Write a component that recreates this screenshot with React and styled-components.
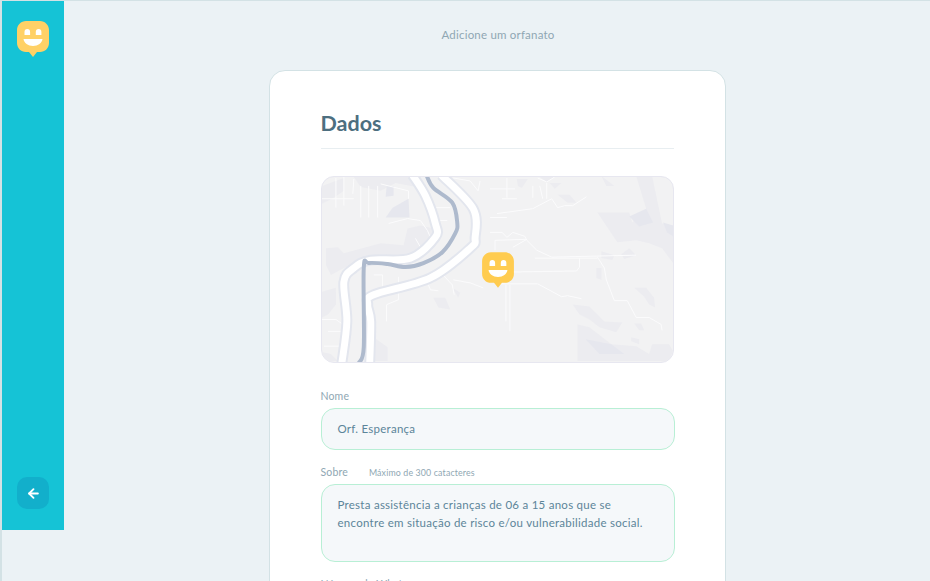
import React from 'react';
import styled, { createGlobalStyle } from 'styled-components';
import { ArrowLeft } from 'lucide-react';

const GlobalStyle = createGlobalStyle`
  html, body {
    margin: 0;
    height: 100%;
    overflow: hidden;
    background: #ebf2f5;
  }
  * {
    box-sizing: border-box;
  }
`;

const Page = styled.div`
  display: flex;
  height: 581px;
  overflow: hidden;
  background: #ebf2f5;
  border-top: 1px solid #d3e2e5;
  border-left: 2px solid #d3e2e5;
  font-family: 'Lato', 'Open Sans', sans-serif;
`;

const Sidebar = styled.aside`
  flex: 0 0 62px;
  height: 529px;
  padding: 20px 15px 21px;
  display: flex;
  flex-direction: column;
  justify-content: space-between;
  background: #15c3d6;
`;

const BackButton = styled.button`
  width: 32px;
  height: 32px;
  padding: 0;
  border: 0;
  border-radius: 10px;
  display: flex;
  align-items: center;
  justify-content: center;
  color: #fff;
  background: #12afcb;
`;

const Main = styled.main`
  flex: 1;
  min-width: 0;
  display: flex;
  flex-direction: column;
  align-items: center;
`;

const PageTitle = styled.p`
  flex-shrink: 0;
  margin: 0;
  padding: 27px 0 0 2px;
  height: 69px;
  font-size: 11.5px;
  line-height: 14px;
  letter-spacing: 0.2px;
  color: #8fa7b3;
`;

const Card = styled.section`
  width: 457px;
  flex-shrink: 0;
  padding: 38px 51px 40px;
  background: #fff;
  border: 1px solid #d3e2e5;
  border-radius: 16px;
`;

const Heading = styled.h2`
  margin: 0 0 27px;
  padding-bottom: 11px;
  font-size: 21.5px;
  line-height: 28px;
  font-weight: 700;
  color: #4d6f80;
  border-bottom: 1px solid #e8eef1;
`;

const MapFrame = styled.div`
  height: 187px;
  margin-bottom: 27px;
  overflow: hidden;
  border: 1px solid #e7e7f0;
  border-radius: 13px;
  background: #f2f2f3;

  svg {
    display: block;
    width: 100%;
    height: 100%;
  }
`;

const Field = styled.div`
  margin-bottom: 16px;
`;

const LabelRow = styled.label`
  display: flex;
  align-items: baseline;
  gap: 21px;
  margin-bottom: 5px;
  font-size: 10.5px;
  line-height: 13px;
  letter-spacing: 0.15px;
  color: #8fa7b3;
`;

const Hint = styled.span`
  font-size: 8.8px;
`;

const InputBox = styled.div`
  height: ${(p) => p.$height}px;
  margin-right: -1px;
  padding: ${(p) => p.$top}px 16px 0;
  font-size: 11.5px;
  line-height: 18px;
  letter-spacing: 0.26px;
  color: #5c8599;
  background: #f5f8fa;
  border: 1px solid #b8efd5;
  border-radius: 14px;
`;

// page coordinates, the svg viewBox starts at the map's corner
const PATCHES = [
  'M321 185 L343 177 V190 L333 197 L321 203 Z',
  'M325 248 L337 247 L343 253 L380 243 L403 245 L407 228 L420 225 L433 228 L423 255 L410 258 L360 262 L343 268 L330 275 L325 265 Z',
  'M321 292 L335 288 V305 L327 315 L321 318 Z',
  'M321 353 L330 355 L337 362 H321 Z',
  'M373 338 L387 348 V362 H373 Z',
  'M353 176 H412 L416 186 L395 182 L380 190 L360 186 Z',
  'M433 298 H445 L450 310 L438 308 Z',
  'M452 288 L460 293 L458 298 Z',
  'M517 178 H528 L522 187 L518 185 Z',
  'M540 176 H555 L547 181 Z',
  'M550 182 H562 L555 188 Z',
  'M558 194 H570 L577 202 L568 202 Z',
  'M602 175 L615 185 H607 Z',
  'M598 212 H630 L633 222 L647 208 L637 175 H653 L663 223 L674 225 V263 L663 248 L650 243 L637 240 L618 242 Z',
  'M602 251 L615 255 L613 260 L602 258 Z',
  'M622 254 L630 248 L637 255 L625 259 Z',
  'M597 268 H602 V280 L597 278 Z',
  'M635 288 H647 L655 298 L656 308 L650 305 L645 297 Z',
  'M573 305 L590 307 L605 322 L623 323 L617 333 L600 328 L590 320 L580 315 Z',
  'M578 325 L590 328 L612 345 L637 347 L650 355 L653 345 H670 L674 352 L670 362 H578 Z',
  'M632 338 L640 340 V345 L632 342 Z',
  'M635 324 H642 L645 331 H640 Z',
];

const DARK_PATCHES = [
  'M386 185 H393 V195 L385 196 Z',
  'M385 217 L392 207 L408 198 L409 217 Z',
  'M630 216 L647 208 L654 222 L640 226 Z',
  'M664 222 L674 225 V236 L668 232 Z',
  'M586 340 L612 345 L625 355 L600 355 Z',
];

const ROADS = [
  'M335 177 V207 M343 176 V205 M360 185 V217 M368 185 V217 M377 185 V217 M321 198 H353 M353 178 L352 193',
  'M380 183 L408 190 V198 M388 223 L407 218 L420 220 L427 230 L430 237 M415 238 L420 247',
  'M435 207 H450 M438 220 H447 M453 177 L470 180 L478 190 L480 180',
  'M321 320 H335 L342 325 M327 332 H342 M323 347 H340',
  'M373 275 H382 V288 M398 277 V283 M386 322 V305 L398 300 V293',
  'M428 285 L430 290 L438 291 M453 280 L470 283 L483 288 M440 272 L452 285 L454 295',
  'M490 217 H507 M497 213 L533 208 L552 198 L558 207 L565 205 H573 L587 196',
  'M490 188 H515 M507 177 V197 M502 198 H517 M533 185 V197 M540 185 L543 198 M547 182 V198 M538 177 L547 181 L555 176',
  'M490 232 H502 L507 237 L513 232 L525 236 L527 240 L537 250 L552 257 L637 255 M535 258 H598',
  'M495 240 V250 M495 240 L527 239 M513 247 L527 239',
  'M513 272 L577 271 L580 267 V258',
  'M598 257 L605 268 L607 280 L615 301 H628 L637 318 H650 L662 325 L663 331',
  'M500 284 H538 L562 297 L568 296 L582 299 M506 285 V322 M510 285 V332',
];

const LEFT_BANK = [
  [341, 364], [346, 322], [343, 282], [353, 268], [370, 260], [410, 258],
  [435, 237], [435, 223], [425, 195], [412, 174],
];

const RIGHT_BANK = [
  [369, 364], [370, 322], [367, 305], [373, 295], [430, 278], [470, 248],
  [475, 237], [473, 208], [441, 174],
];

const RIVER = [
  [358, 364], [363, 348], [363, 268], [368, 263], [387, 264], [405, 267],
  [423, 263], [442, 252], [455, 233], [457, 222], [452, 202], [433, 187], [426, 174],
];

// catmull-rom through the points, so the river doesn't look like a polyline
const smoothPath = (pts) => {
  let d = `M${pts[0][0]} ${pts[0][1]}`;
  for (let i = 0; i < pts.length - 1; i++) {
    const p0 = pts[i - 1] || pts[i];
    const p1 = pts[i];
    const p2 = pts[i + 1];
    const p3 = pts[i + 2] || p2;
    const c1x = p1[0] + (p2[0] - p0[0]) / 6;
    const c1y = p1[1] + (p2[1] - p0[1]) / 6;
    const c2x = p2[0] - (p3[0] - p1[0]) / 6;
    const c2y = p2[1] - (p3[1] - p1[1]) / 6;
    d += ` C${c1x} ${c1y} ${c2x} ${c2y} ${p2[0]} ${p2[1]}`;
  }
  return d;
};

const MapArt = () => (
  <svg viewBox="321 176 353 187" preserveAspectRatio="none" role="img" aria-label="Mapa">
    {PATCHES.map((d) => (
      <path key={d} d={d} fill="#ececf0" />
    ))}
    {DARK_PATCHES.map((d) => (
      <path key={d} d={d} fill="#e6e7ee" />
    ))}
    {ROADS.map((d) => (
      <path key={d} d={d} stroke="#fbfbfc" strokeWidth="1" fill="none" />
    ))}
    {[LEFT_BANK, RIGHT_BANK].map((pts, i) => (
      <g key={i} fill="none">
        <path d={smoothPath(pts)} stroke="#e3e6ee" strokeWidth="11" />
        <path d={smoothPath(pts)} stroke="#fff" strokeWidth="7" />
      </g>
    ))}
    <path d={smoothPath(RIVER)} stroke="#aebacd" strokeWidth="4" fill="none" />
    <Marker x={482} y={252} />
  </svg>
);

// same smiley as the sidebar logo, 32 wide
const markerBody =
  'M9 0 H23 C28 0 32 4 32 9 V22 C32 27 28 31 23 31 H20 L16 36 L12 31 H9 C4 31 0 27 0 22 V9 C0 4 4 0 9 0 Z';

const Smiley = ({ color }) => (
  <>
    <path d={markerBody} fill={color} />
    <path d="M7.5 11 a2.8 3 0 0 1 5.6 0 V14 H7.5 Z M18.8 11 a2.8 3 0 0 1 5.6 0 V14 H18.8 Z" fill="#fff" />
    <path d="M6.5 18 H25.5 C25 22 21 25 16 25 C11 25 7 22 6.5 18 Z" fill="#fff" />
  </>
);

const Marker = ({ x, y }) => (
  <g transform={`translate(${x} ${y})`}>
    <Smiley color="#ffcc50" />
  </g>
);

const Logo = () => (
  <svg width="32" height="37" viewBox="0 0 32 37" role="img" aria-label="Logo">
    <Smiley color="#ffd166" />
  </svg>
);

const App = () => (
  <>
    <GlobalStyle />
    <Page>
      <Sidebar>
        <Logo />
        <BackButton aria-label="Voltar">
          <ArrowLeft size={15} strokeWidth={3} />
        </BackButton>
      </Sidebar>
      <Main>
        <PageTitle>Adicione um orfanato</PageTitle>
        <Card>
          <Heading>Dados</Heading>
          <MapFrame>
            <MapArt />
          </MapFrame>
          <Field>
            <LabelRow>Nome</LabelRow>
            <InputBox $height={42} $top={11}>Orf. Esperança</InputBox>
          </Field>
          <Field>
            <LabelRow>
              Sobre <Hint>Máximo de 300 catacteres</Hint>
            </LabelRow>
            <InputBox $height={78} $top={11}>
              Presta assistência a crianças de 06 a 15 anos que se
              <br />
              encontre em situação de risco e/ou vulnerabilidade social.
            </InputBox>
          </Field>
          <Field>
            <LabelRow>Número de Whatsapp</LabelRow>
          </Field>
        </Card>
      </Main>
    </Page>
  </>
);

export default App;
